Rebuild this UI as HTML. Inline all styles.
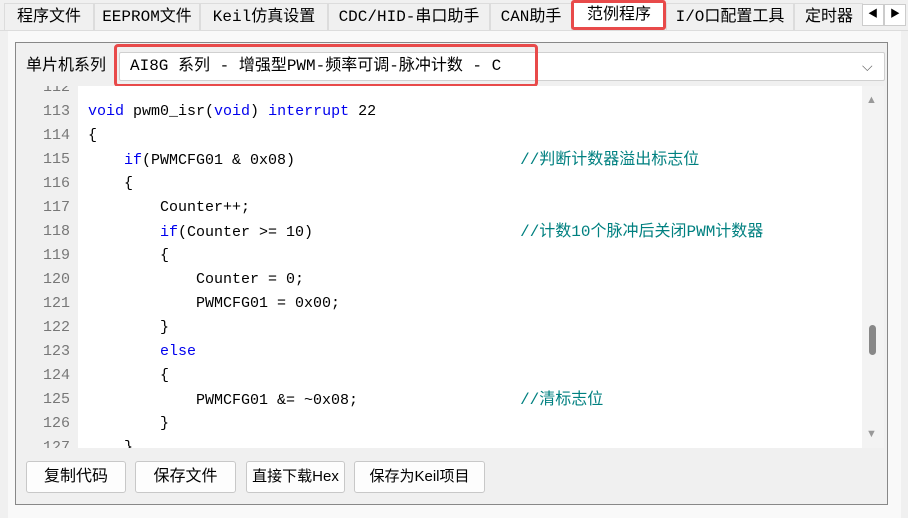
<!DOCTYPE html><html><head><meta charset="utf-8"><style>
body{margin:0;width:908px;height:518px;background:#f0f0f0;position:relative;overflow:hidden;font-family:"Liberation Sans","Noto Sans CJK SC",sans-serif;}
.a{position:absolute}
.tab{position:absolute;top:3px;height:27px;line-height:27px;font-size:16px;color:#000;border:1px solid #dcdcdc;border-bottom:none;background:#f0f0f0;text-align:center;font-family:"Liberation Mono","Noto Sans CJK SC",monospace}
.code{position:absolute;left:26px;top:86px;width:836px;height:362px;background:#fff;overflow:hidden}
.gut{position:absolute;left:0;top:0;width:52px;height:362px;background:#f0f0f0}
.ln{position:absolute;left:0;width:44px;height:20px;line-height:20px;text-align:right;font:15px/20px "Liberation Mono",monospace;color:#777}
.tx{position:absolute;left:62px;height:20px;white-space:pre;font:15px/20px "Liberation Mono","Noto Sans CJK SC",monospace;color:#000}
.k{color:#0000ee}.c{color:#008080;font-size:16px}
.btn{position:absolute;top:461px;height:30px;line-height:30px;background:#fdfdfd;border:1px solid #c8c8c8;border-radius:3px;font-size:16px;text-align:center}
</style></head><body>
<div class="tab" style="left:4px;width:88px">程序文件</div>
<div class="tab" style="left:94px;width:104px">EEPROM文件</div>
<div class="tab" style="left:200px;width:126px">Keil仿真设置</div>
<div class="tab" style="left:328px;width:160px">CDC/HID-串口助手</div>
<div class="tab" style="left:490px;width:80px">CAN助手</div>
<div class="tab" style="left:573px;width:90px;top:1px;background:#fff">范例程序</div>
<div class="a" style="left:571px;top:0px;width:89px;height:24px;border:3px solid #e84a4a;border-radius:3px"></div>
<div class="tab" style="left:666px;width:126px">I/O口配置工具</div>
<div class="tab" style="left:794px;width:68px;border-right:none">定时器</div>
<div class="a" style="left:862px;top:4px;width:20px;height:20px;border:1px solid #ccc;background:#fff;font-size:10px;text-align:center;line-height:20px">◀</div>
<div class="a" style="left:884px;top:4px;width:20px;height:20px;border:1px solid #ccc;background:#fff;font-size:10px;text-align:center;line-height:20px">▶</div>
<div class="a" style="left:0;top:30px;width:908px;height:1px;background:#dcdcdc"></div>
<div class="a" style="left:8px;top:31px;width:893px;height:487px;background:#f9f9f9"></div>
<div class="a" style="left:15px;top:42px;width:871px;height:461px;border:1px solid #888;background:#f0f0f0"></div>
<div class="a" style="left:26px;top:53px;font-size:16px;line-height:26px">单片机系列</div>
<div class="a" style="left:119px;top:52px;width:764px;height:27px;border:1px solid #d0d0d0;background:#fff;border-radius:2px"></div>
<div class="a" style="left:130px;top:53px;font:16px/27px 'Liberation Mono','Noto Sans CJK SC',monospace;white-space:pre">AI8G 系列 - 增强型PWM-频率可调-脉冲计数 - C</div>
<div class="a" style="left:862px;top:53px;font-size:14px;color:#666;line-height:26px">⌵</div>
<div class="a" style="left:114px;top:44px;width:418px;height:37px;border:3px solid #e84a4a;border-radius:4px"></div>
<div class="code">
<div class="gut"></div>
<div class="ln" style="top:-8px">112</div>
<div class="ln" style="top:16px">113</div><div class="tx" style="top:16px"><span class="k">void</span> pwm0_isr(<span class="k">void</span>) <span class="k">interrupt</span> 22</div>
<div class="ln" style="top:40px">114</div><div class="tx" style="top:40px">{</div>
<div class="ln" style="top:64px">115</div><div class="tx" style="top:64px">    <span class="k">if</span>(PWMCFG01 &amp; 0x08)                         <span class="c">//判断计数器溢出标志位</span></div>
<div class="ln" style="top:88px">116</div><div class="tx" style="top:88px">    {</div>
<div class="ln" style="top:112px">117</div><div class="tx" style="top:112px">        Counter++;</div>
<div class="ln" style="top:136px">118</div><div class="tx" style="top:136px">        <span class="k">if</span>(Counter &gt;= 10)                       <span class="c">//计数10个脉冲后关闭PWM计数器</span></div>
<div class="ln" style="top:160px">119</div><div class="tx" style="top:160px">        {</div>
<div class="ln" style="top:184px">120</div><div class="tx" style="top:184px">            Counter = 0;</div>
<div class="ln" style="top:208px">121</div><div class="tx" style="top:208px">            PWMCFG01 = 0x00;</div>
<div class="ln" style="top:232px">122</div><div class="tx" style="top:232px">        }</div>
<div class="ln" style="top:256px">123</div><div class="tx" style="top:256px">        <span class="k">else</span></div>
<div class="ln" style="top:280px">124</div><div class="tx" style="top:280px">        {</div>
<div class="ln" style="top:304px">125</div><div class="tx" style="top:304px">            PWMCFG01 &amp;= ~0x08;                  <span class="c">//清标志位</span></div>
<div class="ln" style="top:328px">126</div><div class="tx" style="top:328px">        }</div>
<div class="ln" style="top:352px">127</div><div class="tx" style="top:352px">    }</div>
</div>
<div class="a" style="left:862px;top:86px;width:22px;height:362px;background:#f3f3f3"></div>
<div class="a" style="left:866px;top:94px;font-size:11px;color:#999">▲</div>
<div class="a" style="left:866px;top:428px;font-size:11px;color:#999">▼</div>
<div class="a" style="left:869px;top:325px;width:7px;height:30px;background:#888;border-radius:4px"></div>
<div class="btn" style="left:26px;width:98px">复制代码</div>
<div class="btn" style="left:135px;width:99px">保存文件</div>
<div class="btn" style="left:246px;width:97px;font-size:15px">直接下载Hex</div>
<div class="btn" style="left:354px;width:129px;font-size:15px">保存为Keil项目</div>
</body></html>
